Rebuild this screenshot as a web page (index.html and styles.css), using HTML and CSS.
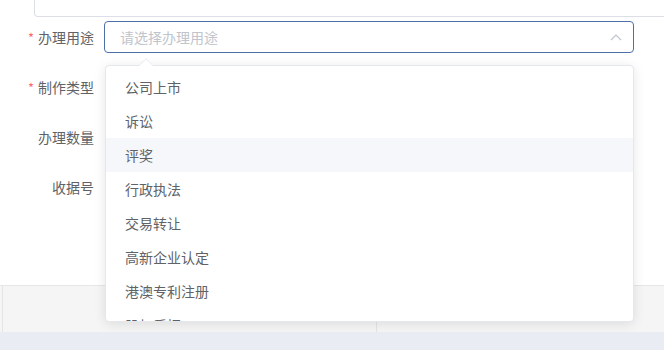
FILE: index.html
```html
<!DOCTYPE html>
<html lang="zh">
<head>
<meta charset="utf-8">
<link rel="stylesheet" href="styles.css">
</head>
<body>
<div class="page">
  <div class="panel">
    <div class="textarea-row"><div class="textarea"></div></div>
    <div class="form">
      <div class="row">
        <div class="label"><span class="req">*</span>办理用途</div>
        <div class="control">
          <div class="select">
            <span class="placeholder">请选择办理用途</span>
            <svg class="chev" width="12" height="8" viewBox="0 0 12 8"><path d="M1 7 L6 2 L11 7" fill="none" stroke="#c0c4cc" stroke-width="1.2"/></svg>
          </div>
          <div class="dropdown">
            <div class="arrow"></div>
            <ul class="list">
              <li>公司上市</li>
              <li>诉讼</li>
              <li class="hover">评奖</li>
              <li>行政执法</li>
              <li>交易转让</li>
              <li>高新企业认定</li>
              <li>港澳专利注册</li>
              <li>股权质押</li>
            </ul>
          </div>
        </div>
      </div>
      <div class="row">
        <div class="label"><span class="req">*</span>制作类型</div>
      </div>
      <div class="row">
        <div class="label">办理数量</div>
      </div>
      <div class="row">
        <div class="label">收据号</div>
      </div>
    </div>
  </div>
  <div class="footer">
    <div class="cell first"></div>
    <div class="cell last"></div>
  </div>
  <div class="bottom"></div>
</div>
</body>
</html>
```
FILE: styles.css
```css
* { box-sizing: border-box; }
html, body { margin: 0; padding: 0; }
body {
  width: 664px;
  height: 350px;
  overflow: hidden;
  background: #e9ecf3;
  font-family: "Noto Sans CJK SC", "Microsoft YaHei", sans-serif;
  font-size: 14px;
  color: #606266;
}
.page { display: flex; flex-direction: column; height: 350px; width: 664px; overflow: hidden; }
.panel {
  background: #fff;
  height: 286px;
  flex-shrink: 0;
  border-bottom: 1px solid #e6e6e6;
}
.textarea-row { padding-left: 34px; }
.textarea {
  height: 17px;
  border: 1px solid #dcdfe6;
  border-top: none;
  border-right: none;
  border-radius: 0 0 0 4px;
}
.form { padding-top: 4px; }
.row {
  display: flex;
  height: 32px;
  margin-bottom: 18px;
}
.label {
  width: 104px;
  padding-right: 10px;
  text-align: right;
  line-height: 32px;
  flex-shrink: 0;
}
.req { color: #f56c6c; margin-right: 4px; font-size: 13px; }
.control { position: relative; width: 530px; }
.select {
  height: 32px;
  border: 1px solid #4d70a6;
  border-radius: 4px;
  display: flex;
  align-items: center;
  justify-content: space-between;
  padding: 0 11px 0 15px;
}
.placeholder { color: #c0c4cc; }
.chev { display: block; }
.dropdown {
  position: absolute;
  left: 1px;
  top: 44px;
  width: 529px;
  height: 257px;
  background: #fff;
  border: 1px solid #e4e7ed;
  border-radius: 4px;
  box-shadow: 0 2px 12px rgba(0,0,0,0.1);
  z-index: 10;
}
.arrow {
  position: absolute;
  top: -6px;
  left: 35px;
  width: 10px;
  height: 10px;
  background: #fff;
  border-left: 1px solid #ebeef5;
  border-top: 1px solid #ebeef5;
  transform: rotate(45deg);
}
.list {
  list-style: none;
  margin: 0;
  padding: 4px 0 0;
  height: 255px;
  overflow: hidden;
  border-radius: 4px;
}
.list li {
  height: 34px;
  line-height: 34px;
  padding-left: 19px;
}
.list li.hover { background: #f5f7fa; }
.footer {
  height: 46px;
  flex-shrink: 0;
  background: #f5f5f5;
  display: flex;
  padding-left: 2px;
}
.cell { border-left: 1px solid #e4e4e4; }
.cell.first { width: 374px; flex-shrink: 0; }
.cell.last { flex: 1; }
.bottom { flex: 1; background: #e9ecf3; }
```
